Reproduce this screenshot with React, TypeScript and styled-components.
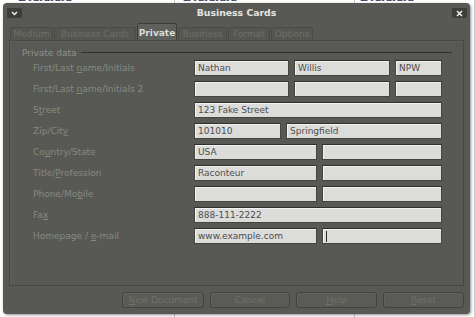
import React from "react";
import styled, { createGlobalStyle } from "styled-components";

const GlobalStyle = createGlobalStyle`
  html, body {
    margin: 0;
    padding: 0;
    background: #ffffff;
  }
  body {
    font-family: "DejaVu Sans", sans-serif;
  }
`;

const Desktop = styled.div`
  position: relative;
  width: 475px;
  height: 317px;
  overflow: hidden;
  background: #ffffff;
`;

const Sheet = styled.div`
  display: flex;
  height: 317px;
`;

const SheetCell = styled.div<{ $w: number; $pad: number }>`
  width: ${(p) => p.$w}px;
  padding-left: ${(p) => p.$pad}px;
  box-sizing: border-box;
  border-right: 1px solid #c8c8c8;
  font-family: "Liberation Serif", serif;
  font-size: 14px;
  line-height: 14px;
  color: #27304a;
  margin-top: -10px;
`;

const Window = styled.div`
  position: absolute;
  left: 3px;
  top: 3px;
  width: 467px;
  height: 311px;
  background: #585954;
  border-radius: 4px;
  box-shadow: 1px 1px 3px rgba(0, 0, 0, 0.45);
  display: flex;
  flex-direction: column;
  font-family: "DejaVu Sans", sans-serif;
  font-size: 9px;
`;

const TitleBar = styled.div`
  height: 17px;
  display: flex;
  align-items: center;
  justify-content: space-between;
  padding: 0 3px 0 4px;
  position: relative;
`;

const Title = styled.div`
  position: absolute;
  left: 0;
  right: 0;
  text-align: center;
  font-weight: bold;
  font-size: 9.3px;
  color: #e6e6e4;
  top: 4px;
  pointer-events: none;
`;

const TitleButton = styled.div`
  width: 15px;
  height: 10px;
  margin-top: 3px;
  background: #3d3e3a;
  border-radius: 2px;
  display: flex;
  align-items: center;
  justify-content: center;
`;

const TabStrip = styled.div`
  display: flex;
  align-items: flex-end;
  height: 17px;
  margin: 3px 0 0 7px;
`;

const Tab = styled.div<{ $w: number; $active?: boolean }>`
  width: ${(p) => p.$w}px;
  height: ${(p) => (p.$active ? 17 : 13)}px;
  box-sizing: border-box;
  border: 1px solid ${(p) => (p.$active ? "#3e3f3a" : "#4a4b46")};
  border-bottom: none;
  border-radius: 2px 2px 0 0;
  background: ${(p) => (p.$active ? "#5f605b" : "#555651")};
  color: ${(p) => (p.$active ? "#dcdcda" : "#6e6f69")};
  font-weight: ${(p) => (p.$active ? "bold" : "normal")};
  display: flex;
  align-items: center;
  justify-content: center;
  font-size: 9px;
  padding-top: ${(p) => (p.$active ? 1 : 0)}px;
  margin-right: 1px;
`;

const Frame = styled.div`
  margin: 0 6px;
  height: 246px;
  box-sizing: border-box;
  border: 1px solid #474843;
  box-shadow: inset 1px 1px 0 #5f605b;
  padding: 6px 0 0 12px;
`;

const GroupHeader = styled.div`
  display: flex;
  align-items: center;
  gap: 4px;
  color: #8f908a;
  height: 11px;
  margin-right: 11px;
`;

const GroupRule = styled.div`
  flex: 1;
  height: 1px;
  background: #2e2f2b;
  margin-top: -1px;
`;

const Rows = styled.div`
  display: flex;
  flex-direction: column;
  gap: 5px;
  margin-top: 2px;
  padding-left: 11px;
`;

const Row = styled.div`
  display: flex;
  align-items: center;
  height: 16px;
`;

const Label = styled.div`
  width: 161px;
  color: #878882;
  white-space: nowrap;
`;

const Key = styled.span`
  text-decoration: underline;
`;

const Fields = styled.div`
  display: flex;
  gap: 5px;
`;

const Field = styled.div<{ $w: number }>`
  width: ${(p) => p.$w}px;
  height: 16px;
  box-sizing: border-box;
  background: #dcdcdb;
  border: 1px solid #44453f;
  border-top-color: #2f302c;
  box-shadow: inset 1px 1px 0 #f2f2f2;
  color: #4e4e4c;
  padding: 0 3px;
  display: flex;
  align-items: center;
  white-space: nowrap;
  overflow: hidden;
`;

const Caret = styled.span`
  width: 1px;
  height: 11px;
  background: #2a2a2a;
`;

const ButtonRow = styled.div`
  display: flex;
  justify-content: flex-end;
  gap: 6px;
  margin: 6px 6px 0 0;
`;

const DialogButton = styled.div<{ $w: number }>`
  width: ${(p) => p.$w}px;
  height: 16px;
  box-sizing: border-box;
  border: 1px solid #43443f;
  border-radius: 3px;
  background: #5a5b56;
  box-shadow: inset 1px 1px 0 #62635e;
  color: #6f706a;
  display: flex;
  align-items: center;
  justify-content: center;
  font-size: 9px;
`;

type FieldSpec = { w: number; value?: string; caret?: boolean };

const rows: { label: React.ReactNode; fields: FieldSpec[] }[] = [
  {
    label: (
      <>
        First/Last <Key>n</Key>ame/Initials
      </>
    ),
    fields: [
      { w: 95, value: "Nathan" },
      { w: 96, value: "Willis" },
      { w: 47, value: "NPW" },
    ],
  },
  {
    label: (
      <>
        First/Last <Key>n</Key>ame/Initials 2
      </>
    ),
    fields: [{ w: 95 }, { w: 96 }, { w: 47 }],
  },
  {
    label: (
      <>
        S<Key>t</Key>reet
      </>
    ),
    fields: [{ w: 248, value: "123 Fake Street" }],
  },
  {
    label: (
      <>
        Zip/Cit<Key>y</Key>
      </>
    ),
    fields: [
      { w: 87, value: "101010" },
      { w: 156, value: "Springfield" },
    ],
  },
  {
    label: (
      <>
        Co<Key>u</Key>ntry/State
      </>
    ),
    fields: [{ w: 123, value: "USA" }, { w: 120 }],
  },
  {
    label: (
      <>
        Title/<Key>P</Key>rofession
      </>
    ),
    fields: [{ w: 123, value: "Raconteur" }, { w: 120 }],
  },
  {
    label: (
      <>
        Phone/Mo<Key>b</Key>ile
      </>
    ),
    fields: [{ w: 123 }, { w: 120 }],
  },
  {
    label: (
      <>
        Fa<Key>x</Key>
      </>
    ),
    fields: [{ w: 248, value: "888-111-2222" }],
  },
  {
    label: (
      <>
        Homepage / <Key>e</Key>-mail
      </>
    ),
    fields: [
      { w: 123, value: "www.example.com" },
      { w: 120, caret: true },
    ],
  },
];

const tabs = [
  { name: "Medium", w: 43 },
  { name: "Business Cards", w: 82 },
  { name: "Private", w: 40, active: true },
  { name: "Business", w: 49 },
  { name: "Format", w: 42 },
  { name: "Options", w: 42 },
];

const App = () => {
  return (
    <>
      <GlobalStyle />
      <Desktop>
        <Sheet>
          <SheetCell $w={175} $pad={18}>Dıdıdıdıd</SheetCell>
          <SheetCell $w={180} $pad={8}>Dıdıdıdıd</SheetCell>
          <SheetCell $w={120} $pad={5}>Dıdıdıdıd</SheetCell>
        </Sheet>
        <Window>
          <TitleBar>
            <TitleButton>
              <svg width="7" height="5" viewBox="0 0 7 5">
                <path d="M1 1 L3.5 3.5 L6 1" stroke="#f0f0f0" strokeWidth="1.4" fill="none" />
              </svg>
            </TitleButton>
            <Title>Business Cards</Title>
            <TitleButton>
              <svg width="7" height="7" viewBox="0 0 7 7">
                <path d="M1 1 L6 6 M6 1 L1 6" stroke="#f0f0f0" strokeWidth="1.5" />
              </svg>
            </TitleButton>
          </TitleBar>
          <TabStrip>
            {tabs.map((t) => (
              <Tab key={t.name} $w={t.w} $active={t.active}>
                {t.name}
              </Tab>
            ))}
          </TabStrip>
          <Frame>
            <GroupHeader>
              Private data
              <GroupRule />
            </GroupHeader>
            <Rows>
              {rows.map((r, i) => (
                <Row key={i}>
                  <Label>{r.label}</Label>
                  <Fields>
                    {r.fields.map((f, j) => (
                      <Field key={j} $w={f.w}>
                        {f.value}
                        {f.caret && <Caret />}
                      </Field>
                    ))}
                  </Fields>
                </Row>
              ))}
            </Rows>
          </Frame>
          <ButtonRow>
            <DialogButton $w={82}>
              <span>
                <Key>N</Key>ew Document
              </span>
            </DialogButton>
            <DialogButton $w={80}>Cancel</DialogButton>
            <DialogButton $w={81}>
              <span>
                <Key>H</Key>elp
              </span>
            </DialogButton>
            <DialogButton $w={81}>
              <span>
                <Key>R</Key>eset
              </span>
            </DialogButton>
          </ButtonRow>
        </Window>
      </Desktop>
    </>
  );
};

export default App;
